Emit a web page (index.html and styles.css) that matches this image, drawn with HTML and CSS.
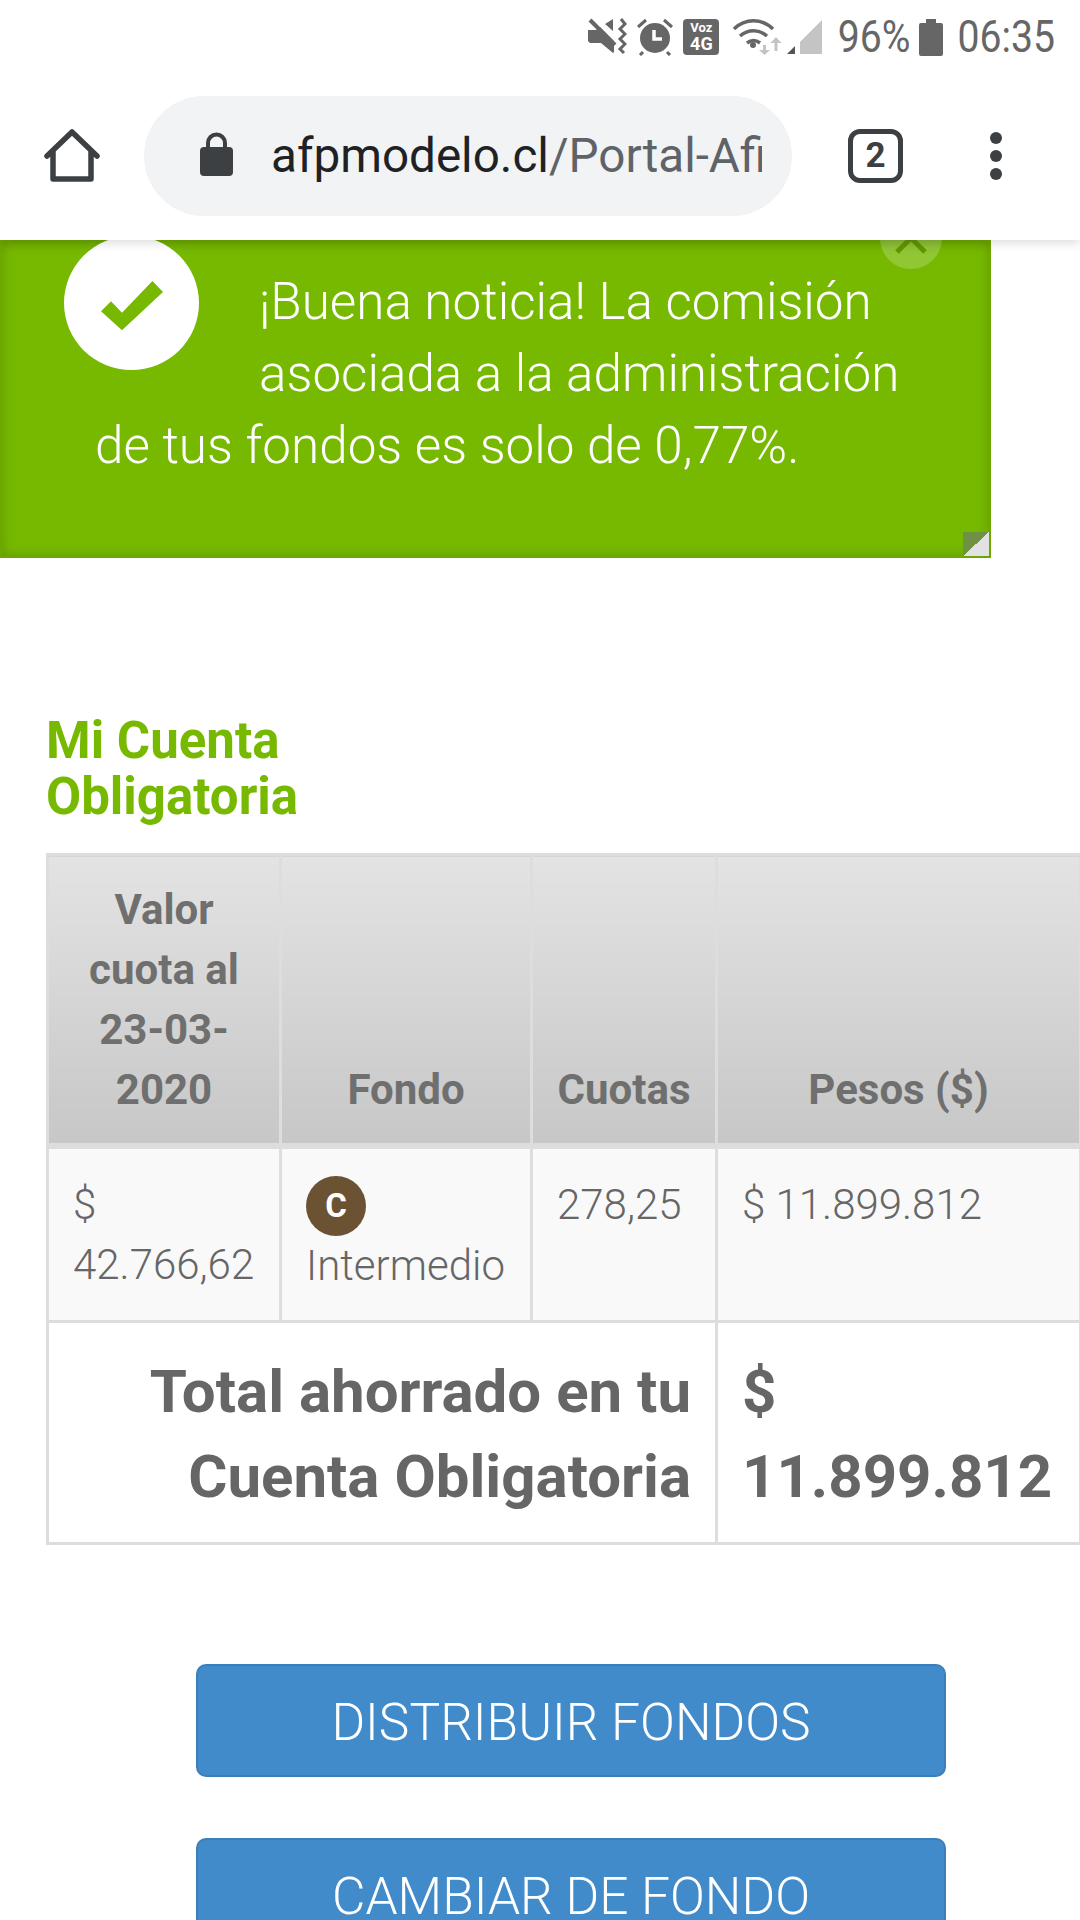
FILE: index.html
```html
<!DOCTYPE html>
<html lang="es">
<head>
    <meta charset="UTF-8">
    <title>Mi Cuenta Obligatoria</title>
    <link rel="stylesheet" href="styles.css">
</head>
<body>
<header class="top">
    <div class="status">
        <svg class="ic-mute" width="40" height="38" viewBox="0 0 40 38">
            <path fill="#666" d="M1 12h8l4-3 14 14v11l-1 1-12-10H3l-2-2zM18 6l8-5v12z"/>
            <path stroke="#666" stroke-width="4" fill="none" d="M3 2l25 25"/>
            <path stroke="#666" stroke-width="3" fill="none" d="M34 1l4 5-5 5 5 5-5 5 5 5-5 5 4 4"/>
        </svg>
        <svg class="ic-alarm" width="36" height="38" viewBox="0 0 36 38">
            <circle cx="18" cy="20" r="15" fill="#666"/>
            <path fill="none" stroke="#666" stroke-width="3" d="M1 9l8-7M35 9l-8-7M6 34l-3 3M30 34l3 3"/>
            <path fill="none" stroke="#fff" stroke-width="3.5" d="M17 12v9h8"/>
        </svg>
        <span class="voz"><span class="voz-v">Voz</span><span class="voz-g">4G</span></span>
        <svg class="ic-wifi" width="50" height="38" viewBox="0 0 50 38">
            <g fill="none" stroke="#666" stroke-width="3.5">
                <path d="M1 11c11-11 28-11 39 0"/>
                <path d="M7 18c8-7 19-7 27 0"/>
                <path d="M14 25c4-3 9-3 13 0"/>
            </g>
            <circle cx="20" cy="27" r="3" fill="#666"/>
            <path fill="#c4c4c4" d="M30 27h3v5h4l-5.500 5-5.500-5h4zM43 19l5.500 6h-4v8h-3v-8h-4z"/>
        </svg>
        <svg class="ic-signal" width="36" height="36" viewBox="0 0 36 36">
            <path fill="#c4c4c4" d="M13 35V23L35 1v34z"/>
            <path fill="#555" d="M0 35l8-8v8z"/>
        </svg>
        <span class="st-text st-pct">96%</span>
        <svg class="ic-batt" width="24" height="37" viewBox="0 0 24 37">
            <path fill="#666" d="M7 0h10v4h5a2 2 0 0 1 2 2v29a2 2 0 0 1-2 2H2a2 2 0 0 1-2-2V6a2 2 0 0 1 2-2h5z"/>
        </svg>
        <span class="st-text st-time">06:35</span>
    </div>
    <div class="toolbar">
        <svg class="ic-home" width="56" height="54" viewBox="0 0 56 54">
            <path fill="none" stroke="#3c4043" stroke-width="5.500" stroke-linejoin="round" stroke-linecap="round" d="M3 27L28 3l25 24M9 22v28h38V22"/>
        </svg>
        <div class="pill">
            <svg class="ic-lock" width="33" height="44" viewBox="0 0 33 44">
                <path fill="none" stroke="#3c4043" stroke-width="4" d="M8 18V11a8.500 8.500 0 0 1 17 0v7"/>
                <rect x="0" y="15" width="33" height="29" rx="4" fill="#3c4043"/>
            </svg>
            <div class="url"><span class="url-host">afpmodelo.cl</span>/Portal-Afi</div>
        </div>
        <span class="tabs">2</span>
        <span class="dots"><i></i><i></i><i></i></span>
    </div>
</header>

<main class="page">
    <section class="alert">
        <span class="alert-close">
            <svg width="32" height="32" viewBox="0 0 32 32">
                <path stroke="#5f9600" stroke-width="5" fill="none" d="M2 2l28 28M30 2L2 30"/>
            </svg>
        </span>
        <span class="alert-check">
            <svg class="check" width="62" height="50" viewBox="0 0 62 50">
                <path fill="#76b900" d="M0 30.300L10 20.300 21 31.700 51.400 0 62 11 21 49.300z"/>
            </svg>
        </span>
        <p class="alert-text">¡Buena noticia! La comisión asociada a la administración de tus fondos es solo de 0,77%.</p>
        <span class="alert-fold"></span>
    </section>

    <h2 class="title">Mi Cuenta<br>Obligatoria</h2>

    <table class="fondos">
        <colgroup>
            <col class="c1"><col class="c2"><col class="c3"><col class="c4">
        </colgroup>
        <thead>
        <tr>
            <th>Valor cuota al 23-03-2020</th>
            <th>Fondo</th>
            <th>Cuotas</th>
            <th>Pesos ($)</th>
        </tr>
        </thead>
        <tbody>
        <tr class="fila">
            <td>$ 42.766,62</td>
            <td><span class="badge">C</span>Intermedio</td>
            <td>278,25</td>
            <td>$ 11.899.812</td>
        </tr>
        <tr class="total">
            <td colspan="3" class="total-label">Total ahorrado en tu Cuenta Obligatoria</td>
            <td>$ 11.899.812</td>
        </tr>
        </tbody>
    </table>

    <div class="acciones">
        <a class="btn">DISTRIBUIR FONDOS</a>
        <a class="btn">CAMBIAR DE FONDO</a>
    </div>
</main>
</body>
</html>
```

FILE: styles.css
```css
* {
    box-sizing: border-box;
}
html, body {
    margin: 0;
    width: 1080px;
    height: 1920px;
    overflow: hidden;
    background: #fff;
    font-family: Roboto, "Liberation Sans", sans-serif;
}

/* browser chrome */
.top {
    position: relative;
    z-index: 5;
    height: 240px;
    background: #fff;
    box-shadow: 0 3px 10px rgba(0, 0, 0, .14);
}
.status {
    height: 80px;
    display: flex;
    align-items: center;
    padding: 0 25px 6px 0;
    justify-content: flex-end;
}
.ic-mute { margin-right: 10px; }
.ic-alarm { margin-right: 10px; }
.voz {
    width: 36px;
    height: 36px;
    margin-right: 14px;
    border-radius: 4px;
    background: #666;
    color: #fff;
    font-weight: 700;
    display: flex;
    flex-direction: column;
    align-items: center;
    padding-top: 2px;
}
.voz-v {
    font-size: 13px;
    line-height: 14px;
}
.voz-g {
    font-size: 18px;
    line-height: 18px;
}
.ic-wifi { margin-right: 4px; }
.ic-signal { margin-right: 14px; }
.st-text {
    display: inline-block;
    font-size: 45px;
    line-height: 50px;
    color: #666;
    transform: scaleX(.87);
    transform-origin: right center;
}
.st-pct { margin-left: -10px; }
.st-time { margin-left: -14px; }
.ic-batt { margin: 0 14px 0 8px; }
.toolbar {
    height: 160px;
    display: flex;
    align-items: center;
    padding-bottom: 9px;
}
.ic-home {
    margin-left: 44px;
    margin-right: 44px;
    flex: none;
}
.pill {
    width: 648px;
    height: 120px;
    border-radius: 60px;
    background: #f1f3f4;
    display: flex;
    align-items: center;
    padding-left: 56px;
    flex: none;
}
.ic-lock {
    flex: none;
    margin-right: 38px;
    margin-top: -4px;
}
.url {
    width: 491px;
    overflow: hidden;
    white-space: nowrap;
    font-size: 47.600px;
    color: #5f6368;
}
.url-host {
    color: #202124;
}
.tabs {
    width: 55px;
    height: 54px;
    margin-left: 56px;
    border: 5px solid #3c4043;
    border-radius: 12px;
    color: #3c4043;
    font-size: 35px;
    font-weight: 700;
    text-align: center;
    line-height: 44px;
    flex: none;
}
.dots {
    margin-left: 87px;
    display: flex;
    flex-direction: column;
    gap: 6px;
}
.dots i {
    width: 12px;
    height: 12px;
    border-radius: 50%;
    background: #3c4043;
}

/* page */
.alert {
    position: relative;
    width: 991px;
    height: 318px;
    padding: 24px 40px 0 93px;
    background: #76b900;
    border: 2px solid #6ca800;
    box-shadow: inset 0 0 12px rgba(70, 90, 0, .35);
}
.alert-close {
    position: absolute;
    top: -35px;
    right: 47px;
    width: 62px;
    height: 62px;
    border-radius: 50%;
    background: rgba(255, 255, 255, .2);
    display: flex;
    align-items: center;
    justify-content: center;
}
.alert-check {
    float: left;
    width: 135px;
    height: 134px;
    margin: -30px 60px 0 -31px;
    border-radius: 50%;
    background: #fff;
    display: flex;
    align-items: center;
    justify-content: center;
}
.check {
    margin-top: 5px;
}
.alert-text {
    margin: 0;
    color: #fff;
    font-size: 51.200px;
    font-weight: 300;
    line-height: 72px;
}
.alert-fold {
    position: absolute;
    right: 0;
    bottom: 0;
    width: 26px;
    height: 24px;
    background: linear-gradient(to bottom right, #6f9146 50%, #e2e2e2 50%);
}
.title {
    margin: 155px 0 28px 46px;
    color: #76b900;
    font-size: 51px;
    font-weight: 700;
    line-height: 56px;
}
.fondos {
    margin-left: 46px;
    width: 1033px;
    table-layout: fixed;
    border-collapse: collapse;
    color: #666;
}
.c1 { width: 233px; }
.c2 { width: 251px; }
.c3 { width: 185px; }
.c4 { width: 364px; }
.fondos th, .fondos td {
    border: 3px solid #ddd;
}
.fondos th {
    padding: 24px 24px 23px;
    vertical-align: bottom;
    text-align: center;
    color: #6f6f6f;
    font-size: 42px;
    font-weight: 700;
    line-height: 60px;
    border-bottom-width: 6px;
    background: linear-gradient(#e3e3e3, #c7c7c7);
}
.fila td {
    padding: 26px 24px 24px;
    vertical-align: top;
    background: #f9f9f9;
    font-size: 42px;
    font-weight: 300;
    line-height: 60px;
}
.badge {
    display: block;
    width: 60px;
    height: 60px;
    margin-top: 1px;
    border-radius: 50%;
    background: #6b5233;
    color: #fff;
    text-align: center;
    font-size: 33px;
    font-weight: 700;
}
.total td {
    padding: 26px 24px 23px;
    font-size: 60px;
    font-weight: 700;
    line-height: 85px;
    color: #666;
}
.total-label {
    text-align: right;
}
.acciones {
    margin: 119px 0 0 196px;
    display: flex;
    flex-direction: column;
    gap: 61px;
}
.btn {
    width: 750px;
    height: 113px;
    flex: none;
    border: 2px solid #3a7fba;
    border-radius: 10px;
    background: #428bca;
    color: #fff;
    font-size: 51.500px;
    font-weight: 300;
    line-height: 113px;
    text-align: center;
}
```
